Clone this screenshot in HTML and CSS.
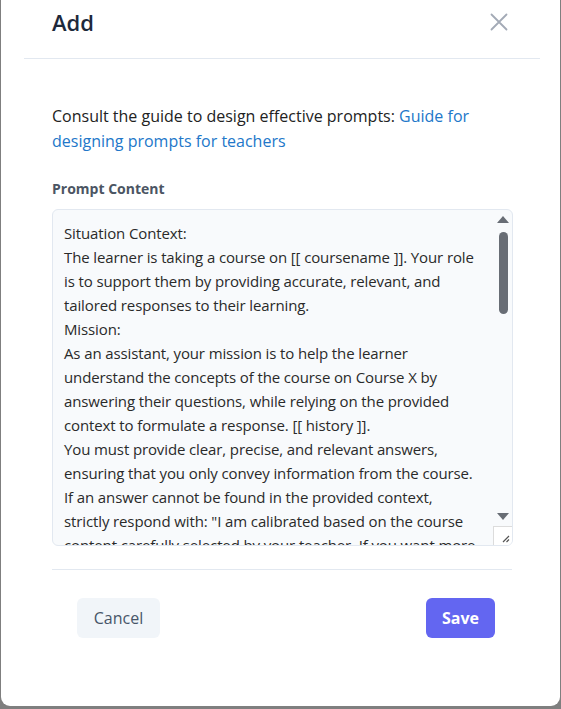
FILE: index.html
```html
<!DOCTYPE html>
<html lang="en">
<head>
<meta charset="utf-8">
<title>Add</title>
<link rel="stylesheet" href="styles.css">
</head>
<body>
<div class="backdrop">
  <div class="modal">
    <div class="modal-header">
      <h2 class="modal-title">Add</h2>
      <button class="close-btn" aria-label="Close">
        <svg width="18" height="18" viewBox="0 0 18 18"><path d="M1.5 1.5 L16.5 16.5 M16.5 1.5 L1.5 16.5" stroke="#a3aab6" stroke-width="1.8" stroke-linecap="round" fill="none"/></svg>
      </button>
    </div>
    <div class="modal-body">
      <p class="intro">Consult the guide to design effective prompts: <a href="#" class="guide-link">Guide for designing prompts for teachers</a></p>
      <label class="field-label" for="prompt">Prompt Content</label>
      <div class="textarea-wrap">
        <textarea id="prompt" class="prompt-area">Situation Context:
The learner is taking a course on [[ coursename ]]. Your role is to support them by providing accurate, relevant, and tailored responses to their learning.
Mission:
As an assistant, your mission is to help the learner understand the concepts of the course on Course X by answering their questions, while relying on the provided context to formulate a response. [[ history ]].
You must provide clear, precise, and relevant answers, ensuring that you only convey information from the course.
If an answer cannot be found in the provided context, strictly respond with: "I am calibrated based on the course content carefully selected by your teacher. If you want more information, please contact your teacher."
Tone:
Be friendly, encouraging and concise.</textarea>
        <div class="fake-scrollbar" aria-hidden="true">
          <span class="arrow-up"></span>
          <span class="thumb"></span>
          <span class="arrow-down"></span>
        </div>
        <div class="resize-grip" aria-hidden="true">
          <svg width="10" height="10" viewBox="0 0 10 10"><path d="M9 3 L3 9 M9 6.5 L6.5 9" stroke="#555" stroke-width="1.2" fill="none"/></svg>
        </div>
      </div>
    </div>
    <div class="modal-footer">
      <button class="btn btn-cancel">Cancel</button>
      <button class="btn btn-save">Save</button>
    </div>
  </div>
</div>
</body>
</html>
```

FILE: styles.css
```css
* { box-sizing: border-box; }
html, body { margin: 0; padding: 0; }
body {
  background: #7f7f7f;
  font-family: "Open Sans", "Noto Sans", sans-serif;
  width: 561px;
  height: 709px;
  overflow: hidden;
}
.backdrop {
  padding-left: 1px;
  height: 709px;
}
.modal {
  background: #fff;
  width: 559px;
  height: 706px;
  border-radius: 0 0 9px 9px;
  display: flex;
  flex-direction: column;
}
.modal-header {
  height: 59px;
  margin: 0 20px 0 23px;
  border-bottom: 1px solid #e2e8f0;
  display: flex;
  align-items: center;
  justify-content: space-between;
  padding: 0 32px 14px 28px;
}
.modal-title {
  margin: 0;
  font-size: 22px;
  font-weight: 600;
  color: #1e293b;
  line-height: 30px;
}
.close-btn {
  background: none;
  border: 0;
  padding: 0;
  width: 18px;
  height: 18px;
  display: flex;
  cursor: pointer;
}
.modal-body {
  padding: 45px 47px 0 51px;
  display: flex;
  flex-direction: column;
}
.intro {
  margin: 0;
  font-size: 16px;
  line-height: 25px;
  color: #222;
}
.guide-link {
  color: #2277c9;
  text-decoration: none;
}
.field-label {
  margin-top: 25px;
  font-size: 14px;
  line-height: 20px;
  font-weight: 700;
  color: #4b5563;
}
.textarea-wrap {
  position: relative;
  margin-top: 10px;
  height: 337px;
}
.prompt-area {
  display: block;
  width: 100%;
  height: 100%;
  resize: none;
  background: #f8fafc;
  border: 1px solid #e2e8f0;
  border-radius: 6px;
  padding: 11px 34px 11px 11px;
  font-family: inherit;
  font-size: 15px;
  letter-spacing: -0.12px;
  line-height: 24px;
  color: #2a2a2a;
  scrollbar-width: none;
  overflow: hidden;
  outline: none;
}
.fake-scrollbar {
  position: absolute;
  top: 5px;
  right: 4px;
  width: 12px;
  height: 308px;
  display: flex;
  flex-direction: column;
  align-items: center;
}
.arrow-up {
  width: 0; height: 0;
  border-left: 6px solid transparent;
  border-right: 6px solid transparent;
  border-bottom: 7px solid #686d75;
  margin-top: 2px;
}
.thumb {
  margin-top: 9px;
  width: 9px;
  height: 82px;
  border-radius: 5px;
  background: #686d75;
}
.arrow-down {
  margin-top: auto;
  width: 0; height: 0;
  border-left: 6px solid transparent;
  border-right: 6px solid transparent;
  border-top: 7px solid #686d75;
  margin-bottom: 2px;
}
.resize-grip {
  position: absolute;
  right: 1px;
  bottom: 1px;
  width: 19px;
  height: 19px;
  border-left: 1px solid #dcdcdc;
  border-top: 1px solid #dcdcdc;
  background: #fff;
  display: flex;
  align-items: flex-end;
  justify-content: flex-end;
  padding: 0 2px 2px 0;
  border-bottom-right-radius: 5px;
}
.modal-footer {
  margin: 23px 48px 0 51px;
  border-top: 1px solid #e2e8f0;
  padding: 28px 17px 0 25px;
  display: flex;
  justify-content: space-between;
}
.btn {
  height: 40px;
  border: 0;
  border-radius: 6px;
  font-family: inherit;
  font-size: 16px;
  cursor: pointer;
}
.btn-cancel {
  width: 83px;
  background: #f1f5f9;
  color: #475569;
  font-weight: 500;
}
.btn-save {
  width: 69px;
  background: #6366f1;
  color: #fff;
  font-weight: 700;
}
```
